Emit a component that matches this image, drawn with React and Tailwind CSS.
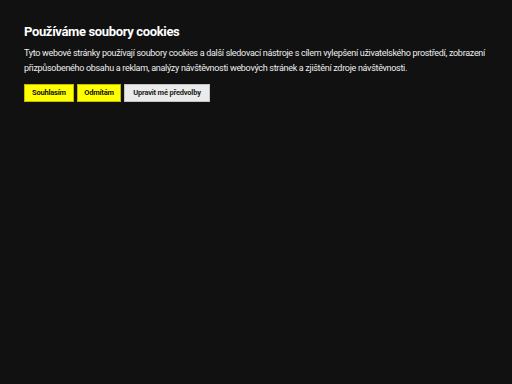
import React from "react";

const App = () => {
  return (
    <div className="w-[512px] h-[384px] bg-[#111111] font-['Roboto',sans-serif] overflow-hidden">
      {/* cookie bar */}
      <div className="px-6 pt-[23px]">
        <h2 className="text-[13px] leading-[18px] font-bold text-white tracking-[-0.35px]">
          Používáme soubory cookies
        </h2>
        <p className="mt-[5px] text-[9px] leading-[15px] text-[#eeeeee] whitespace-nowrap tracking-[-0.3px]">
          Tyto webové stránky používají soubory cookies a další sledovací nástroje s cílem vylepšení uživatelského prostředí, zobrazení
          <br />
          přizpůsobeného obsahu a reklam, analýzy návštěvnosti webových stránek a zjištění zdroje návštěvnosti.
        </p>

        {/* buttons */}
        <div className="flex gap-[3px] mt-[8px]">
          <button className="w-[50px] h-[18px] bg-[#ffff00] border border-[#bdbd00] text-[7.5px] font-bold text-[#111] tracking-[-0.2px]">
            Souhlasím
          </button>
          <button className="w-[44px] h-[18px] bg-[#ffff00] border border-[#bdbd00] text-[7.5px] font-bold text-[#111] tracking-[-0.2px]">
            Odmítám
          </button>
          <button className="w-[86px] h-[18px] bg-[#ebebeb] border border-[#c4c4c4] text-[7.5px] font-bold text-[#222] tracking-[-0.2px]">
            Upravit mé předvolby
          </button>
        </div>
      </div>
    </div>
  );
};

export default App;
